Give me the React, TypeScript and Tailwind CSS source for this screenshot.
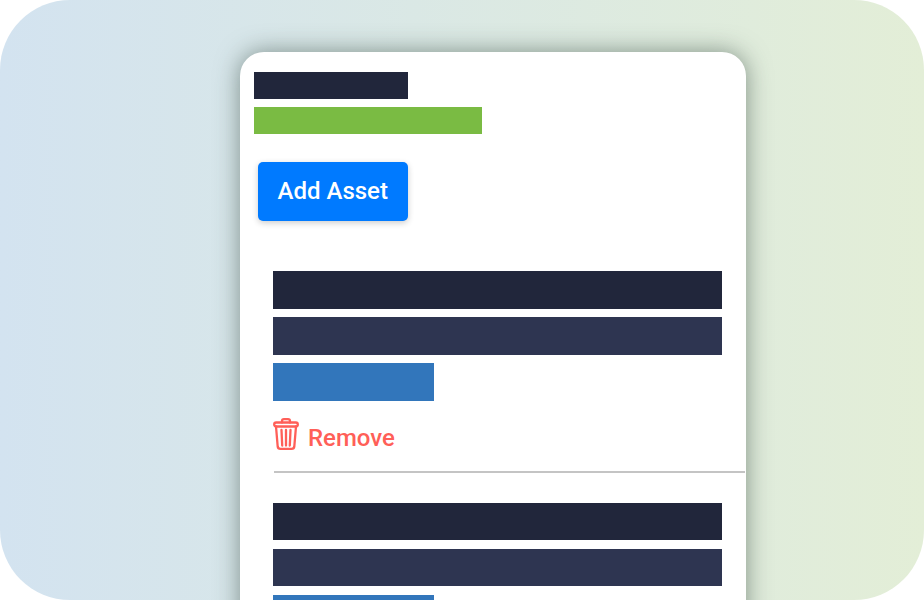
import React from 'react';

function TrashIcon() {
    return (
        <svg width="26" height="32" viewBox="0 0 26 32" fill="none" stroke="#ff5f58" strokeWidth="2.3" strokeLinecap="round" strokeLinejoin="round" className="shrink-0">
            <path d="M9 4.500V3C9 1.800 9.800 1.200 11 1.200h4c1.200 0 2 .6 2 1.800v1.500" />
            <rect x="1.200" y="4.500" width="23.600" height="4" rx="2" />
            <path d="M3 8.500l1.700 20c.2 1.700 1 2.300 2.700 2.300h11.200c1.700 0 2.500-.6 2.700-2.300l1.700-20" />
            <path d="M8.500 12l.7 15.500M13 12v15.500M17.500 12l-.7 15.500" />
        </svg>
    );
}

function AssetBars() {
    return (
        <div className="flex flex-col gap-[8.5px]">
            <div className="h-[37.5px] w-[449.5px] bg-[#21263b]"></div>
            <div className="h-[37.5px] w-[449.5px] bg-[#2e3551]"></div>
            <div className="h-[37.5px] w-[161.5px] bg-[#3276bb]"></div>
        </div>
    );
}

export default function App() {
    return (
        <div className="w-[924px] h-[600px] bg-white overflow-hidden" style={{ fontFamily: 'Roboto, sans-serif' }}>
            <div className="w-full h-full rounded-[70px] overflow-hidden bg-gradient-to-r from-[#d3e3f0] to-[#e3eed7] pl-[240px] pt-[52px]">
                <div className="w-[506px] h-[620px] bg-white rounded-[24px] shadow-[0_0_24px_rgba(50,70,60,0.55)] pt-[20px]">
                    <div className="pl-[14px]">
                        <div className="h-[27px] w-[153.5px] bg-[#21263b]"></div>
                        <div className="h-[27px] w-[228px] bg-[#7abb43] mt-[7.5px]"></div>
                        <button className="mt-[28.5px] ml-[4px] h-[59px] w-[149.5px] pb-[2px] rounded-[5px] bg-[#007aff] text-white text-[24px] font-medium shadow-[0_2px_6px_rgba(0,0,0,0.2)] flex items-center justify-center">
                            Add Asset
                        </button>
                    </div>
                    <div className="pl-[32.500px] mt-[50px]">
                        <AssetBars />
                        <div className="flex items-center gap-[9.5px] mt-[16px] h-[35px] text-[#ff5f58] text-[24px] font-medium">
                            <TrashIcon />
                            <span className="mt-[8px]">Remove</span>
                        </div>
                    </div>
                    <div className="ml-[34px] mr-px h-[2px] bg-[#c4c4c4] mt-[19px]"></div>
                    <div className="pl-[32.500px] mt-[30px]">
                        <AssetBars />
                    </div>
                </div>
            </div>
        </div>
    );
}
